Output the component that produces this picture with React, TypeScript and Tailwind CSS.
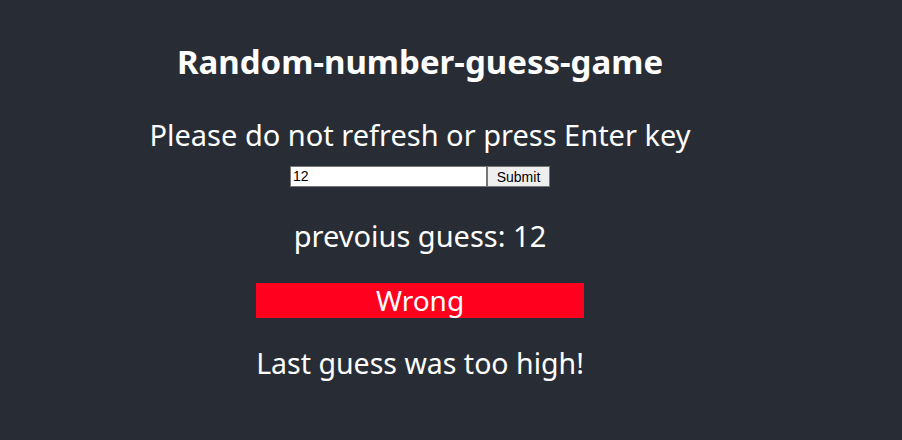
export default function App() {
  return (
    <div className="min-h-[440px] w-full bg-[#282c34] text-white" style={{ fontFamily: '"Noto Sans", "Open Sans", sans-serif' }}>
      <div className="flex w-[840px] flex-col items-center">
        <h1 className="mt-[42px] h-[40px] text-[33px] font-bold leading-[40px]">Random-number-guess-game</h1>
        <p className="mt-[34px] h-[38px] text-[29px] leading-[38px]">Please do not refresh or press Enter key</p>
        <form className="mt-[12px] flex h-[21px]" onSubmit={(e) => e.preventDefault()}>
          <input
            defaultValue="12"
            className="h-[21px] w-[197px] border border-[#767676] bg-white px-[2px] text-[14px] text-black outline-none"
            style={{ fontFamily: '"Liberation Sans", Arial, sans-serif' }}
          />
          <button
            type="submit"
            className="h-[21px] w-[63px] border border-[#767676] bg-[#efefef] text-[14px] text-black"
            style={{ fontFamily: '"Liberation Sans", Arial, sans-serif' }}
          >
            Submit
          </button>
        </form>
        <p className="mt-[30px] h-[38px] text-[29px] leading-[38px]">prevoius guess: 12</p>
        <div className="mt-[28px] flex h-[35px] w-[328px] items-center justify-center bg-[#ff001e] text-[28px] leading-[35px]">Wrong</div>
        <p className="mt-[26px] h-[38px] text-[28.5px] leading-[38px]">Last guess was too high!</p>
      </div>
    </div>
  );
}
